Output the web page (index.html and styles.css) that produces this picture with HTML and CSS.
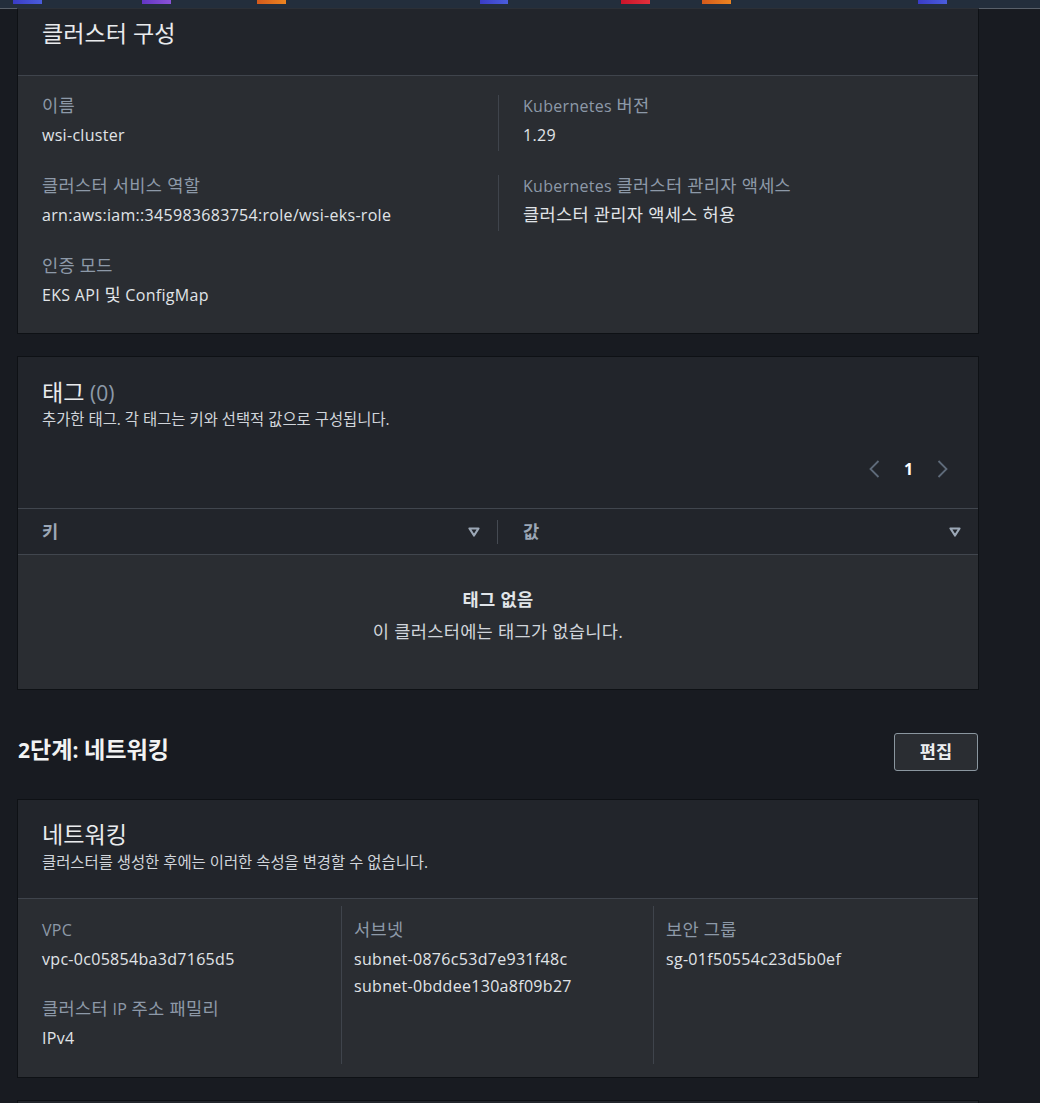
FILE: index.html
```html
<!DOCTYPE html>
<html lang="ko">
<head>
<meta charset="utf-8">
<title>EKS 클러스터 검토</title>
<link rel="stylesheet" href="styles.css">
</head>
<body>
<div class="topbar">
  <span class="fav fav-blue f1"></span>
  <span class="fav fav-purple f2"></span>
  <span class="fav fav-orange f3"></span>
  <span class="fav fav-blue f4"></span>
  <span class="fav fav-red f5"></span>
  <span class="fav fav-orange f6"></span>
  <span class="fav fav-blue f7"></span>
</div>

<main class="content">
  <section class="card">
    <header class="card-head head-cut">
      <h2 class="card-title"><span class="ko">클러스터 구성</span></h2>
    </header>
    <div class="card-body body-config">
      <div class="kv"><div class="kv-label"><span class="ko">이름</span></div><div class="kv-value">wsi-cluster</div></div>
      <div class="kv kv-div"><div class="kv-label">Kubernetes <span class="ko">버전</span></div><div class="kv-value">1.29</div></div>
      <div class="kv"><div class="kv-label"><span class="ko">클러스터 서비스 역할</span></div><div class="kv-value">arn:aws:iam::345983683754:role/wsi-eks-role</div></div>
      <div class="kv kv-div"><div class="kv-label">Kubernetes <span class="ko">클러스터 관리자 액세스</span></div><div class="kv-value"><span class="ko">클러스터 관리자 액세스 허용</span></div></div>
      <div class="kv"><div class="kv-label"><span class="ko">인증 모드</span></div><div class="kv-value">EKS API <span class="ko">및</span> ConfigMap</div></div>
    </div>
  </section>

  <section class="card card-gap">
    <header class="card-head head-tags">
      <h2 class="card-title"><span class="ko">태그</span> <span class="count">(0)</span></h2>
      <p class="card-desc"><span class="ko">추가한 태그. 각 태그는 키와 선택적 값으로 구성됩니다.</span></p>
      <nav class="pager">
        <span class="pg-chev">
          <svg width="11" height="18" viewBox="0 0 11 18"><path d="M9.5 1 L1.5 9 L9.5 17" fill="none" stroke="#5f6b7a" stroke-width="1.8"/></svg>
        </span>
        <span class="pg-num">1</span>
        <span class="pg-chev">
          <svg width="11" height="18" viewBox="0 0 11 18"><path d="M1.5 1 L9.5 9 L1.5 17" fill="none" stroke="#5f6b7a" stroke-width="1.8"/></svg>
        </span>
      </nav>
    </header>
    <div class="thead">
      <div class="th th-first">
        <span class="ko">키</span>
        <svg class="sort" width="12" height="10" viewBox="0 0 12 10"><path d="M1.5 1.5 H10.5 L6 8.5 Z" fill="none" stroke="#9ba7b6" stroke-width="2.2" stroke-linejoin="round"/></svg>
      </div>
      <span class="th-sep"></span>
      <div class="th th-second">
        <span class="ko">값</span>
        <svg class="sort" width="12" height="10" viewBox="0 0 12 10"><path d="M1.5 1.5 H10.5 L6 8.5 Z" fill="none" stroke="#9ba7b6" stroke-width="2.2" stroke-linejoin="round"/></svg>
      </div>
    </div>
    <div class="empty">
      <div class="empty-title"><span class="ko">태그 없음</span></div>
      <div class="empty-text"><span class="ko">이 클러스터에는 태그가 없습니다.</span></div>
    </div>
  </section>

  <div class="step-head">
    <h1 class="step-title">2<span class="ko">단계</span>: <span class="ko">네트워킹</span></h1>
    <button class="btn"><span class="ko">편집</span></button>
  </div>

  <section class="card">
    <header class="card-head head-net">
      <h2 class="card-title"><span class="ko">네트워킹</span></h2>
      <p class="card-desc"><span class="ko">클러스터를 생성한 후에는 이러한 속성을 변경할 수 없습니다.</span></p>
    </header>
    <div class="card-body body-net">
      <div class="col">
        <div class="kv"><div class="kv-label">VPC</div><div class="kv-value">vpc-0c05854ba3d7165d5</div></div>
        <div class="kv kv-next"><div class="kv-label"><span class="ko">클러스터</span> IP <span class="ko">주소 패밀리</span></div><div class="kv-value">IPv4</div></div>
      </div>
      <div class="col col-div">
        <div class="kv"><div class="kv-label"><span class="ko">서브넷</span></div><div class="kv-value">subnet-0876c53d7e931f48c</div><div class="kv-value kv-more">subnet-0bddee130a8f09b27</div></div>
      </div>
      <div class="col col-div">
        <div class="kv"><div class="kv-label"><span class="ko">보안 그룹</span></div><div class="kv-value">sg-01f50554c23d5b0ef</div></div>
      </div>
    </div>
  </section>

  <section class="card card-gap card-next">
    <header class="card-head head-next"></header>
  </section>
</main>
</body>
</html>
```

FILE: styles.css
```css
html, body {
  margin: 0;
  padding: 0;
}

body {
  background: #181b21;
  color: #dde1e5;
  font-family: "Open Sans", "Noto Sans CJK KR", sans-serif;
  font-size: 16px;
  line-height: 22px;
  letter-spacing: 0.3px;
  overflow: hidden;
  height: 1103px;
}

/* Korean runs: the reference's Hangul face is larger than Noto's */
.ko {
  font-size: 1.1em;
  line-height: 1;
}

/* top favorites bar */
.topbar {
  height: 8px;
  background: #232e3c;
  border-bottom: 1px solid #59606a;
  display: flex;
  align-items: flex-start;
}

.fav {
  display: block;
  width: 29px;
  height: 4px;
  flex: none;
}

.fav-blue { background: linear-gradient(to right, #3a3cc6, #4a5ddc); }
.fav-purple { background: linear-gradient(to right, #6236c4, #8a52d8); }
.fav-orange { background: linear-gradient(to right, #d45a1c, #ec8420); }
.fav-red { background: linear-gradient(to right, #c9142a, #e2303c); }

.f1 { margin-left: 13px; }
.f2 { margin-left: 100px; }
.f3 { margin-left: 86px; }
.f4 { margin-left: 194px; width: 28px; }
.f5 { margin-left: 113px; }
.f6 { margin-left: 52px; }
.f7 { margin-left: 187px; }

/* layout */
.content {
  padding: 0 62px 0 18px;
}

.card {
  background: #2a2d32;
  box-shadow: 0 0 0 1px rgba(8, 9, 12, 0.55);
}

.card-gap {
  margin-top: 24px;
}

.card-head {
  background: #22252b;
  padding: 0 24px;
}

.card-title {
  margin: 0;
  font-size: 21px;
  line-height: 28px;
  font-weight: 400;
  letter-spacing: 0;
  color: #e9ebed;
}

.count {
  color: #8d99a8;
}

.card-desc {
  margin: 0;
  font-size: 14px;
  line-height: 20px;
  letter-spacing: 0;
  color: #d1d5db;
}

.head-cut {
  padding-top: 11px;
  padding-bottom: 27px;
  border-bottom: 1px solid #3f444c;
}

.head-tags {
  padding-top: 22px;
  padding-bottom: 23px;
}

.head-tags .card-desc {
  margin-top: 3px;
}

.head-net {
  padding-top: 21px;
  padding-bottom: 25px;
  border-bottom: 1px solid #3f444c;
}

.head-net .card-desc {
  margin-top: 4px;
}

.head-next {
  height: 60px;
}

/* key value */
.kv-label {
  color: #8d99a8;
  line-height: 22px;
}

.kv-value {
  color: #e0e4e8;
  line-height: 22px;
  margin-top: 7px;
}

.kv-value.kv-more {
  margin-top: 5px;
}

.body-config {
  display: grid;
  grid-template-columns: 1fr 1fr;
  row-gap: 24px;
  padding: 19px 24px 22px;
}

.body-config .kv {
  padding-bottom: 5px;
}

.body-config .kv-div {
  border-left: 1px solid #3f444c;
  padding-left: 24px;
}

/* pager */
.pager {
  display: flex;
  justify-content: flex-end;
  align-items: center;
  height: 32px;
  margin-top: 23px;
  margin-right: 6px;
}

.pg-chev {
  display: flex;
  align-items: center;
  width: 11px;
  height: 18px;
}

.pg-num {
  font-weight: 700;
  color: #ffffff;
  width: 9px;
  margin: 0 24px 0 24px;
  text-align: center;
}

/* table header */
.thead {
  display: flex;
  align-items: center;
  background: #22252b;
  border-top: 1px solid #41464e;
  border-bottom: 1px solid #41464e;
  height: 45px;
}

.th {
  flex: 1;
  display: flex;
  align-items: center;
  justify-content: space-between;
  font-weight: 700;
  color: #9ba7b6;
  padding-right: 17px;
}

.th-first {
  padding-left: 24px;
}

.th-second {
  padding-left: 25px;
}

.th-sep {
  width: 1px;
  height: 24px;
  background: #454a52;
  flex: none;
}

.sort {
  display: block;
}

/* empty state */
.empty {
  text-align: center;
  padding: 34px 0 46px;
}

.empty-title {
  font-weight: 700;
  color: #e1e5e9;
}

.empty-text {
  margin-top: 10px;
  color: #d1d5db;
}

/* step header */
.step-head {
  display: flex;
  justify-content: space-between;
  align-items: flex-start;
  margin-top: 44px;
  margin-bottom: 29px;
}

.step-title {
  margin: 0;
  font-size: 21px;
  line-height: 34px;
  font-weight: 700;
  letter-spacing: 0;
  color: #f2f3f3;
}

.btn {
  width: 84px;
  height: 38px;
  background: #2a2d32;
  border: 1px solid #8a969f;
  border-radius: 3px;
  color: #eceef0;
  font-family: inherit;
  font-size: 16px;
  font-weight: 700;
  padding: 0;
}

/* networking body */
.body-net {
  display: grid;
  grid-template-columns: 299px 312px 1fr;
  padding: 7px 24px 13px;
}

.col {
  padding: 13px 0 15px;
}

.col-div {
  border-left: 1px solid #3f444c;
  padding-left: 12px;
}

.kv-next {
  margin-top: 28px;
}
```
